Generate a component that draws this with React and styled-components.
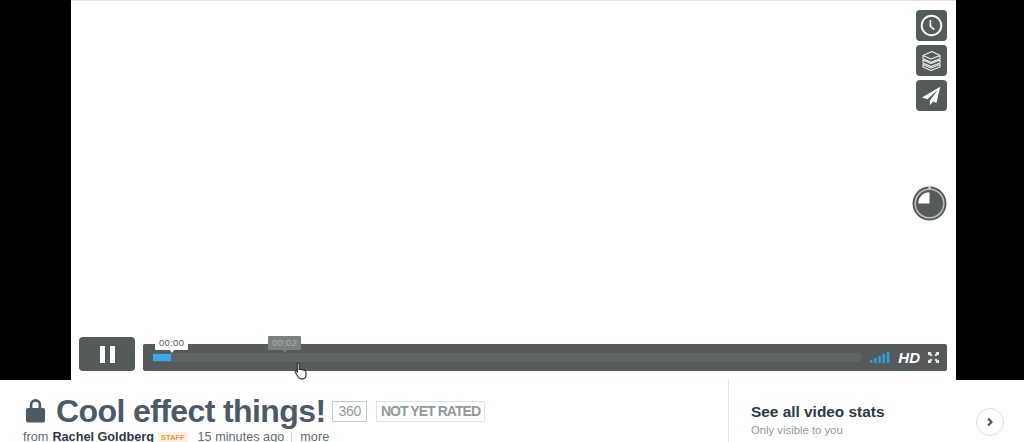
import React from "react";
import styled, { createGlobalStyle } from "styled-components";

const Global = createGlobalStyle`
  html, body { margin: 0; padding: 0; background: #fff; overflow: hidden; }
  body { font-family: "Liberation Sans", Arial, sans-serif; }
`;

const Page = styled.div`
  width: 1024px;
  height: 442px;
  overflow: hidden;
  display: flex;
  flex-direction: column;
`;

const Stage = styled.div`
  height: 380px;
  background: #000;
  display: flex;
  justify-content: flex-start;
  padding-left: 71px;
  box-sizing: border-box;
`;

const Video = styled.div`
  position: relative;
  width: 885px;
  height: 380px;
  background: #fff;
  border-top: 1px solid #dfe4e6;
  box-sizing: border-box;
`;

const SideTools = styled.div`
  position: absolute;
  top: 9px;
  right: 9px;
  display: flex;
  flex-direction: column;
  gap: 4px;
`;

const ToolButton = styled.div`
  width: 31px;
  height: 31px;
  border-radius: 4px;
  background: #555b5b;
  display: flex;
  align-items: center;
  justify-content: center;
`;

const Timer = styled.svg`
  position: absolute;
  left: 841px;
  top: 185px;
`;

const Controls = styled.div`
  position: absolute;
  left: 8px;
  right: 9px;
  top: 336px;
  display: flex;
  gap: 8px;
`;

const PauseButton = styled.div`
  width: 56px;
  height: 34px;
  border-radius: 4px;
  background: #555b5b;
  display: flex;
  align-items: center;
  justify-content: center;
  gap: 5px;
`;

const PauseBar = styled.span`
  width: 5px;
  height: 17px;
  background: #fff;
`;

const Bar = styled.div`
  position: relative;
  flex: 1;
  margin-top: 7px;
  height: 27px;
  border-radius: 2px;
  background: #555b5b;
  display: flex;
  align-items: center;
  padding: 0 8px 0 10px;
  gap: 9px;
`;

const Track = styled.div`
  flex: 1;
  height: 9px;
  background: #5f6464;
  display: flex;
  align-items: center;
`;

const Played = styled.div`
  width: 18px;
  height: 7px;
  background: #3aa8ea;
`;

const Tip = styled.div`
  position: absolute;
  top: -8px;
  height: 14px;
  line-height: 14px;
  padding: 0 4px;
  font-size: 9.500px;
  font-weight: 400;
  letter-spacing: 0.300px;
  border-radius: 1px;
  background: ${(p) => (p.$dim ? "#7b8181" : "#fff")};
  color: ${(p) => (p.$dim ? "#a9adad" : "#555b5b")};
  left: ${(p) => p.$left}px;

  &::after {
    content: "";
    position: absolute;
    left: 50%;
    bottom: -3px;
    margin-left: -2px;
    border-left: 2px solid transparent;
    border-right: 2px solid transparent;
    border-top: 3px solid ${(p) => (p.$dim ? "#7b8181" : "#fff")};
  }
`;

const Hd = styled.span`
  color: #fff;
  font-size: 15px;
  font-weight: 700;
  font-style: italic;
  line-height: 1;
`;

const BarIcons = styled.div`
  display: flex;
  align-items: center;
  gap: 8px;
`;

const Cursor = styled.svg`
  position: absolute;
  left: 223px;
  top: 361px;
`;

const Info = styled.div`
  flex: 1;
  display: flex;
  min-height: 0;
`;

const Main = styled.div`
  width: 728px;
  padding: 15px 0 0 25px;
  box-sizing: border-box;
`;

const TitleRow = styled.div`
  display: flex;
  align-items: center;
  height: 32px;
`;

const Lock = styled.svg`
  margin: -3px 10px 0 0;
`;

const Title = styled.h1`
  margin: 0 7px 0 0;
  font-size: 32px;
  line-height: 32px;
  font-weight: 700;
  letter-spacing: -0.600px;
  color: #4a5a66;
  white-space: nowrap;
`;

const Badge = styled.span`
  height: 19px;
  line-height: 19px;
  padding: 0 ${(p) => (p.$wide ? 4 : 5)}px;
  margin-right: 9px;
  border: 1px solid ${(p) => (p.$wide ? "#dde2e5" : "#bcc7cf")};
  border-radius: 1px;
  font-size: 14px;
  font-weight: ${(p) => (p.$wide ? 700 : 400)};
  letter-spacing: ${(p) => (p.$wide ? "-0.950px" : "-0.300px")};
  color: #8f999f;
`;

const Meta = styled.div`
  margin: 3px 0 0 -2px;
  display: flex;
  align-items: center;
  font-size: 12.700px;
  line-height: 15px;
  color: #5f6a72;
  white-space: nowrap;
`;

const Author = styled.b`
  margin: 0 4px 0 4px;
  color: #28394a;
`;

const Staff = styled.span`
  font-size: 7.500px;
  line-height: 11px;
  font-weight: 700;
  color: #e9965a;
  background: #fdf0df;
  padding: 0 3px;
  margin-right: 10px;
  border-radius: 1px;
`;

const Sep = styled.span`
  width: 1px;
  height: 12px;
  background: #ccd3d8;
  margin: 0 8px 0 7px;
`;

const Aside = styled.div`
  flex: 1;
  border-left: 1px solid #dfe4e6;
  display: flex;
  align-items: flex-start;
  justify-content: space-between;
  padding: 24px 20px 0 22px;
`;

const StatTitle = styled.div`
  font-size: 15.400px;
  line-height: 16px;
  font-weight: 700;
  color: #28394a;
`;

const StatSub = styled.div`
  margin-top: 4px;
  font-size: 11.300px;
  line-height: 13px;
  color: #8f999f;
`;

const Round = styled.div`
  width: 26px;
  height: 26px;
  margin-top: 4px;
  border: 1px solid #d7dee3;
  border-radius: 50%;
  display: flex;
  align-items: center;
  justify-content: center;
`;

export default function App() {
  return (
    <Page>
      <Global />
      <Stage>
        <Video>
          <SideTools>
            <ToolButton>
              <svg width="25" height="25" viewBox="0 0 23 23" fill="none" stroke="#f4f4f4">
                <circle cx="11.500" cy="11.500" r="9" strokeWidth="1.800" />
                <path d="M10.500 6.500v5.800l3.600 3" strokeWidth="1.600" />
              </svg>
            </ToolButton>
            <ToolButton>
              <svg width="21" height="23" viewBox="0 0 21 23" fill="#555b5b" stroke="#f1f1f1" strokeWidth="1.100" strokeLinejoin="round">
                <path d="M2 15.500v2.500l8 3.500 9-3.500v-2.500l-9 3.500z" />
                <path d="M2 11v3l8 3.500 9-3.500v-3l-9 3.500z" />
                <path d="M2 6.500v3.200l8 3.500 9-3.500V6.500L11 2.500z" />
                <path d="M2 6.500 10 10l9-3.500" />
              </svg>
            </ToolButton>
            <ToolButton>
              <svg width="23" height="23" viewBox="0 0 21 21">
                <path d="M18.500 2.500 1.800 12.300l5 1.700L16.500 5 9 15v4.500l3-3.500 3 1.300z" fill="#fff" />
              </svg>
            </ToolButton>
          </SideTools>
          <Timer width="35" height="35" viewBox="0 0 36 36">
            <circle cx="18" cy="18" r="17.500" fill="#555b5b" />
            <circle cx="18" cy="18" r="14.700" fill="none" stroke="#b8bcbc" strokeWidth="1.600" />
            <path d="M18 18V6.500A11.500 11.500 0 0 0 6.500 18z" fill="#fff" />
            <circle cx="18" cy="1.800" r="1.300" fill="#d9dbdb" />
          </Timer>
          <Controls>
            <PauseButton>
              <PauseBar />
              <PauseBar />
            </PauseButton>
            <Bar>
              <Tip $left={12}>00:00</Tip>
              <Tip $dim $left={125}>00:02</Tip>
              <Track>
                <Played />
              </Track>
              <BarIcons>
                <svg width="20" height="11" viewBox="0 0 20 11" fill="#2f9fe0">
                  <rect x="0" y="8" width="2.500" height="3" />
                  <rect x="4.200" y="6" width="2.500" height="5" />
                  <rect x="8.400" y="4" width="2.500" height="7" />
                  <rect x="12.600" y="2" width="2.500" height="9" />
                  <rect x="16.800" y="0" width="2.500" height="11" />
                </svg>
                <Hd>HD</Hd>
                <svg width="11" height="11" viewBox="0 0 11 11" fill="#f0f0f0">
                  <path d="M0 0h3.500L2.500 1 4.500 3 3 4.500 1 2.500 0 3.500zM11 0v3.500L10 2.500 8 4.500 6.500 3l2-2L7.500 0zM0 11V7.500l1 1L3 6.500 4.500 8l-2 2 1 1zM11 11H7.500l1-1-2-2L8 6.500l2 2 1-1z" />
                </svg>
              </BarIcons>
            </Bar>
          </Controls>
          <Cursor width="14" height="18" viewBox="0 0 13 17">
            <path d="M3 1.500c.8-.8 1.800-.4 1.800.6v5l1-.3 1.400.2 1.200.4 1.500.5c.9.500 1.300 1 1.300 2v2.500c0 1.500-1 3-2.500 3.500H6c-1.200-.5-2-1.500-2.700-2.700L1 9.500c-.3-.9.700-1.500 1.500-.8l.6.7z" fill="#fff" stroke="#333" strokeWidth="1.100" />
          </Cursor>
        </Video>
      </Stage>
      <Info>
        <Main>
          <TitleRow>
            <Lock width="21" height="26" viewBox="0 0 22 26">
              <path d="M5 12V7.500a6 6 0 0 1 12 0V12h-2.800V7.500a3.200 3.200 0 0 0-6.400 0V12z" fill="#4a5a66" />
              <rect x="1" y="11" width="20" height="15" rx="2" fill="#4a5a66" />
            </Lock>
            <Title>Cool effect things!</Title>
            <Badge>360</Badge>
            <Badge $wide>NOT YET RATED</Badge>
          </TitleRow>
          <Meta>
            from<Author>Rachel Goldberg</Author>
            <Staff>STAFF</Staff>
            15 minutes ago
            <Sep />
            more
          </Meta>
        </Main>
        <Aside>
          <div>
            <StatTitle>See all video stats</StatTitle>
            <StatSub>Only visible to you</StatSub>
          </div>
          <Round>
            <svg width="8" height="10" viewBox="0 0 8 10" fill="none" stroke="#4a5a66" strokeWidth="2.200">
              <path d="M2 1.500 5.500 5 2 8.500" />
            </svg>
          </Round>
        </Aside>
      </Info>
    </Page>
  );
}
